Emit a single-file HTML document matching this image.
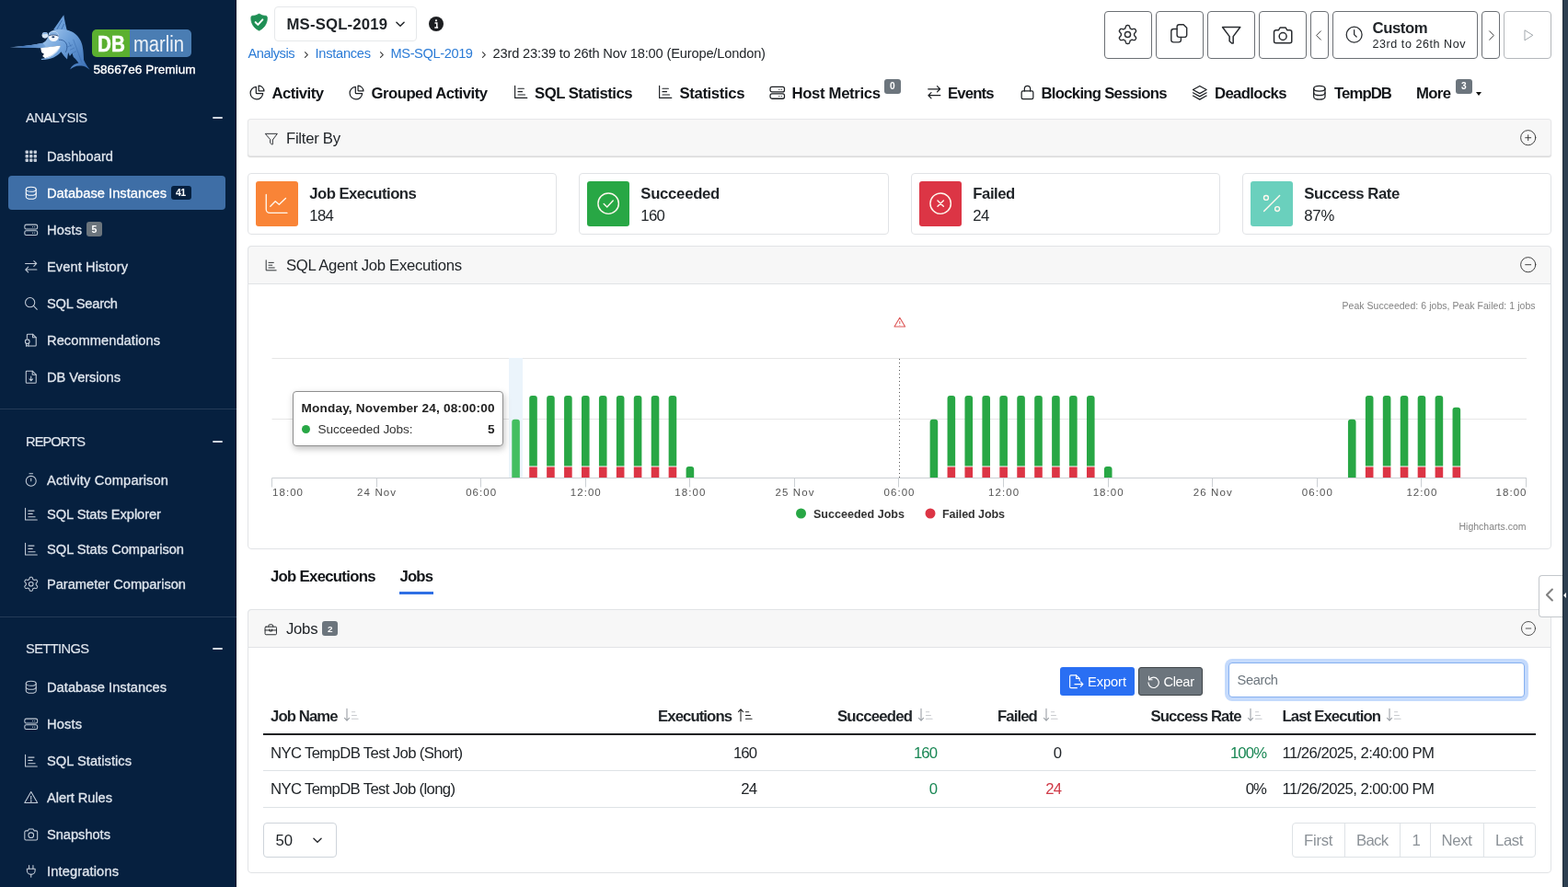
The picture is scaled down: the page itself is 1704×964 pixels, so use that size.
<!DOCTYPE html><html lang="en"><head><meta charset="utf-8"><title>DBmarlin - SQL Agent Jobs</title><style>html,body{margin:0;padding:0}body{width:1704px;height:964px;overflow:hidden;background:#fff;position:relative;will-change:transform;font-family:"Liberation Sans",sans-serif}
.b{position:absolute;box-sizing:content-box}.i{position:absolute;overflow:visible}.t{position:absolute;white-space:nowrap;display:block}</style></head><body><div class="b" style="left:0px;top:0px;width:257px;height:964px;background:#06203f;border-right:1px solid #03152a;box-sizing:border-box"></div><div class="b" style="left:100px;top:32px;width:40.5px;height:30px;background:#5bb030;border-radius:5px 0 0 5px"></div><div class="b" style="left:140.5px;top:32px;width:67px;height:30px;background:#4a7db3;border-radius:0 5px 5px 0"></div><span class="t" style="left:106.3px;top:38px;line-height:20px;font-size:23.3px;font-weight:700;color:#ffffff;letter-spacing:0px;-webkit-text-stroke:0.5px #fff;transform-origin:0 50%;transform:scaleX(0.8854);">DB</span><span class="t" style="left:145.3px;top:38px;line-height:20px;font-size:24.56px;font-weight:400;color:rgba(255,255,255,.9);letter-spacing:0px;transform-origin:0 50%;transform:scaleX(0.8228);">marlin</span><span class="t" style="left:101.5px;top:66px;line-height:20px;font-size:13.58px;font-weight:500;color:#ffffff;letter-spacing:0.003px;-webkit-text-stroke:0.35px #fff;">58667e6 Premium</span><svg class="i" style="left:0;top:0;width:110px;height:90px" viewBox="0 0 110 90"><defs><linearGradient id="fg" gradientUnits="userSpaceOnUse" x1="560" y1="330" x2="1150" y2="780"><stop offset="0" stop-color="#a6c9ee"/><stop offset="0.45" stop-color="#6c9fd9"/><stop offset="1" stop-color="#3b70b6"/></linearGradient><linearGradient id="bl" gradientUnits="userSpaceOnUse" x1="120" y1="0" x2="640" y2="0"><stop offset="0" stop-color="#244f8f" stop-opacity="0"/><stop offset="0.35" stop-color="#3f73b5"/><stop offset="1" stop-color="#7eacdf"/></linearGradient></defs><g transform="translate(0 8) scale(0.08296)"><path d="M835 100C790 165 740 235 700 292L770 310 880 312C862 240 845 170 835 100Z" fill="#6b9ed8"/><path d="M812 170 745 290M840 215 800 300" stroke="#2f62a4" stroke-width="9" fill="none"/><path d="M640 335C680 290 760 285 840 292C930 298 1010 345 1058 440C1082 490 1094 560 1098 690C1120 740 1150 780 1176 816C1130 776 1085 760 1050 765C1000 760 950 785 918 814C940 760 985 735 1030 730C1005 690 985 668 962 650L945 600 915 640 893 590 880 682C850 650 820 615 800 582C760 640 660 690 545 688L538 676C640 660 740 600 792 500L560 532C420 532 270 528 128 522C270 512 440 492 560 466C600 450 625 420 640 335Z" fill="url(#fg)"/><path d="M128 522C270 511 440 492 560 466L610 528C450 534 270 528 128 522Z" fill="url(#bl)"/><path d="M532 533 792 500C770 570 700 632 592 666L556 640 578 612 545 592Z" fill="#fff"/><path d="M592 666C670 640 745 590 792 500C785 560 720 625 640 660Z" fill="#c6daf1"/><circle cx="590" cy="366" r="40" fill="#d6e5f5"/><path d="M552 356a40 40 0 0 1 77-2C605 346 575 346 552 356Z" fill="#86b1e0"/><circle cx="702" cy="380" r="67" fill="#f3f7fc"/><path d="M636 372a67 67 0 0 1 132 4C725 355 675 355 636 372Z" fill="#86b1e0"/><path d="M637 373C680 356 725 356 767 377" stroke="#1d3d6e" stroke-width="10" fill="none"/><ellipse cx="697" cy="390" rx="19" ry="12" fill="#1d3d6e"/><path d="M770 425C825 420 868 452 876 500C882 535 872 566 858 590" stroke="#234e8c" stroke-width="9" fill="none"/><path d="M900 455 930 515M880 520 950 490M915 560 975 530M945 600 1000 575M960 420 1070 720" stroke="#2f62a4" stroke-width="7" fill="none" opacity="0.75"/></g></svg><span class="t" style="left:28px;top:118px;line-height:20px;font-size:14.63px;font-weight:400;color:#dfe5ed;letter-spacing:-0.493px;-webkit-text-stroke:0.15px;">ANALYSIS</span><div class="b" style="left:230.5px;top:127.25px;width:11.5px;height:1.5px;background:#cfd6df;border-radius:1px"></div><div class="b" style="left:9px;top:191px;width:236px;height:37px;background:#3e6ea6;border-radius:4px"></div><svg class="i" style="left:25.45px;top:161.25px;width:17.5px;height:17.5px;color:#c3ccd8" viewBox="0 0 24 24" fill="none" stroke="currentColor" stroke-width="1.45" stroke-linecap="round" stroke-linejoin="round" ><rect x="3.5" y="3.5" width="4.6" height="4.6" rx="1.2" fill="currentColor" stroke="none"/><rect x="9.7" y="3.5" width="4.6" height="4.6" rx="1.2" fill="currentColor" stroke="none"/><rect x="15.9" y="3.5" width="4.6" height="4.6" rx="1.2" fill="currentColor" stroke="none"/><rect x="3.5" y="9.7" width="4.6" height="4.6" rx="1.2" fill="currentColor" stroke="none"/><rect x="9.7" y="9.7" width="4.6" height="4.6" rx="1.2" fill="currentColor" stroke="none"/><rect x="15.9" y="9.7" width="4.6" height="4.6" rx="1.2" fill="currentColor" stroke="none"/><rect x="3.5" y="15.9" width="4.6" height="4.6" rx="1.2" fill="currentColor" stroke="none"/><rect x="9.7" y="15.9" width="4.6" height="4.6" rx="1.2" fill="currentColor" stroke="none"/><rect x="15.9" y="15.9" width="4.6" height="4.6" rx="1.2" fill="currentColor" stroke="none"/></svg><span class="t" style="left:51px;top:160px;line-height:20px;font-size:14.63px;font-weight:400;color:#dfe5ed;letter-spacing:0.057px;-webkit-text-stroke:0.3px;">Dashboard</span><svg class="i" style="left:25.45px;top:201.25px;width:17.5px;height:17.5px;color:#ffffff" viewBox="0 0 24 24" fill="none" stroke="currentColor" stroke-width="1.45" stroke-linecap="round" stroke-linejoin="round" ><ellipse cx="12" cy="6.5" rx="7.5" ry="3.5"/><path d="M4.5 6.5v11c0 1.9 3.4 3.5 7.5 3.5s7.5-1.6 7.5-3.5v-11"/><path d="M4.5 12c0 1.9 3.4 3.5 7.5 3.5s7.5-1.6 7.5-3.5"/></svg><span class="t" style="left:51px;top:200px;line-height:20px;font-size:14.63px;font-weight:500;color:#ffffff;letter-spacing:0.042px;-webkit-text-stroke:0.3px;">Database Instances</span><div class="b" style="left:186px;top:202px;width:22px;height:15px;background:#06203f;border-radius:3px"></div><span class="t" style="left:191px;top:200px;line-height:20px;font-size:10.45px;font-weight:700;color:#ffffff;letter-spacing:-0.625px;">41</span><svg class="i" style="left:25.45px;top:241.25px;width:17.5px;height:17.5px;color:#c3ccd8" viewBox="0 0 24 24" fill="none" stroke="currentColor" stroke-width="1.45" stroke-linecap="round" stroke-linejoin="round" ><rect x="2.5" y="4.3" width="19" height="6.7" rx="2.4"/><rect x="2.5" y="13.3" width="19" height="6.7" rx="2.4"/><path d="M14.5 7.65h.01M17.5 7.65h.01M14.5 16.65h.01M17.5 16.65h.01" stroke-width="1.6"/></svg><span class="t" style="left:51px;top:240px;line-height:20px;font-size:14.63px;font-weight:400;color:#dfe5ed;letter-spacing:0.152px;-webkit-text-stroke:0.3px;">Hosts</span><div class="b" style="left:93.5px;top:241px;width:17.5px;height:16px;background:#6c757d;border-radius:3px"></div><span class="t" style="left:99.5px;top:240px;line-height:20px;font-size:10.45px;font-weight:700;color:#ffffff;letter-spacing:0px;">5</span><svg class="i" style="left:25.45px;top:281.25px;width:17.5px;height:17.5px;color:#c3ccd8" viewBox="0 0 24 24" fill="none" stroke="currentColor" stroke-width="1.45" stroke-linecap="round" stroke-linejoin="round" ><path d="M3.5 7.5h16.5M16.2 3.5 20.2 7.5l-4 4"/><path d="M20.5 16.5H4M7.8 12.5 3.8 16.5l4 4"/></svg><span class="t" style="left:51px;top:280px;line-height:20px;font-size:14.63px;font-weight:400;color:#dfe5ed;letter-spacing:0.086px;-webkit-text-stroke:0.3px;">Event History</span><svg class="i" style="left:25.45px;top:321.25px;width:17.5px;height:17.5px;color:#c3ccd8" viewBox="0 0 24 24" fill="none" stroke="currentColor" stroke-width="1.45" stroke-linecap="round" stroke-linejoin="round" ><circle cx="10.5" cy="10.5" r="7"/><path d="M15.7 15.7 21 21"/></svg><span class="t" style="left:51px;top:320px;line-height:20px;font-size:14.63px;font-weight:400;color:#dfe5ed;letter-spacing:-0.236px;-webkit-text-stroke:0.3px;">SQL Search</span><svg class="i" style="left:25.45px;top:361.25px;width:17.5px;height:17.5px;color:#c3ccd8" viewBox="0 0 24 24" fill="none" stroke="currentColor" stroke-width="1.45" stroke-linecap="round" stroke-linejoin="round" ><path d="M9 20.5h9.5a1 1 0 0 0 1-1V8l-5-5H7a1 1 0 0 0-1 1v5"/><path d="M14.5 3v5h5"/><circle cx="6.5" cy="14" r="3.2"/><path d="M4.8 16.8V21l1.7-1 1.7 1v-4.2"/></svg><span class="t" style="left:51px;top:360px;line-height:20px;font-size:14.63px;font-weight:400;color:#dfe5ed;letter-spacing:0.076px;-webkit-text-stroke:0.3px;">Recommendations</span><svg class="i" style="left:25.45px;top:401.25px;width:17.5px;height:17.5px;color:#c3ccd8" viewBox="0 0 24 24" fill="none" stroke="currentColor" stroke-width="1.45" stroke-linecap="round" stroke-linejoin="round" ><path d="M18.5 21h-13a1 1 0 0 1-1-1V4a1 1 0 0 1 1-1H14l5.5 5.5V20a1 1 0 0 1-1 1z"/><path d="M14 3v5.5h5.5"/><path d="M12 11v6.5M9.5 15l2.5 2.5 2.5-2.5"/></svg><span class="t" style="left:51px;top:400px;line-height:20px;font-size:14.63px;font-weight:400;color:#dfe5ed;letter-spacing:-0.048px;-webkit-text-stroke:0.3px;">DB Versions</span><div class="b" style="left:0px;top:443.5px;width:257px;height:1px;background:#243b57"></div><span class="t" style="left:28px;top:470px;line-height:20px;font-size:14.63px;font-weight:400;color:#dfe5ed;letter-spacing:-0.9px;-webkit-text-stroke:0.15px;">REPORTS</span><div class="b" style="left:230.5px;top:479.25px;width:11.5px;height:1.5px;background:#cfd6df;border-radius:1px"></div><svg class="i" style="left:25.45px;top:513.25px;width:17.5px;height:17.5px;color:#c3ccd8" viewBox="0 0 24 24" fill="none" stroke="currentColor" stroke-width="1.45" stroke-linecap="round" stroke-linejoin="round" ><circle cx="12" cy="13.5" r="7.5"/><path d="M12 13.5V9.5M9.5 2.5h5"/></svg><span class="t" style="left:51px;top:512px;line-height:20px;font-size:14.63px;font-weight:400;color:#dfe5ed;letter-spacing:0.154px;-webkit-text-stroke:0.3px;">Activity Comparison</span><svg class="i" style="left:25.45px;top:550.25px;width:17.5px;height:17.5px;color:#c3ccd8" viewBox="0 0 24 24" fill="none" stroke="currentColor" stroke-width="1.45" stroke-linecap="round" stroke-linejoin="round" ><path d="M3.5 3v17.5h17.5"/><path d="M8 7h8.5M8 11.5h6M8 16h10"/></svg><span class="t" style="left:51px;top:549px;line-height:20px;font-size:14.63px;font-weight:400;color:#dfe5ed;letter-spacing:-0.038px;-webkit-text-stroke:0.3px;">SQL Stats Explorer</span><svg class="i" style="left:25.45px;top:588.25px;width:17.5px;height:17.5px;color:#c3ccd8" viewBox="0 0 24 24" fill="none" stroke="currentColor" stroke-width="1.45" stroke-linecap="round" stroke-linejoin="round" ><path d="M3.5 3v17.5h17.5"/><path d="M8 7h8.5M8 11.5h6M8 16h10"/></svg><span class="t" style="left:51px;top:587px;line-height:20px;font-size:14.63px;font-weight:400;color:#dfe5ed;letter-spacing:-0.002px;-webkit-text-stroke:0.3px;">SQL Stats Comparison</span><svg class="i" style="left:25.45px;top:626.25px;width:17.5px;height:17.5px;color:#c3ccd8" viewBox="0 0 24 24" fill="none" stroke="currentColor" stroke-width="1.45" stroke-linecap="round" stroke-linejoin="round" ><circle cx="12" cy="12" r="3.2"/><path d="M12 1.65 12.45 1.66 12.9 1.69 13.35 1.74 13.73 2.16 14.05 2.76 14.3 3.4 14.51 4.05 14.67 4.66 14.85 5.12 15.15 5.25 15.44 5.39 15.72 5.55 16 5.72 16.27 5.9 16.54 6.09 17.02 6.02 17.63 5.85 18.29 5.71 18.98 5.61 19.65 5.58 20.21 5.7 20.48 6.06 20.73 6.44 20.96 6.83 21.18 7.22 21.38 7.63 21.56 8.04 21.39 8.58 21.02 9.15 20.6 9.7 20.14 10.2 19.69 10.64 19.39 11.03 19.42 11.35 19.44 11.68 19.45 12 19.44 12.32 19.42 12.65 19.39 12.97 19.69 13.36 20.14 13.8 20.6 14.3 21.02 14.85 21.39 15.42 21.56 15.96 21.38 16.37 21.18 16.78 20.96 17.17 20.73 17.56 20.48 17.94 20.21 18.3 19.65 18.42 18.98 18.39 18.29 18.29 17.63 18.15 17.02 17.98 16.54 17.91 16.27 18.1 16 18.28 15.73 18.45 15.44 18.61 15.15 18.75 14.85 18.88 14.67 19.34 14.51 19.95 14.3 20.6 14.05 21.24 13.73 21.84 13.35 22.26 12.9 22.31 12.45 22.34 12 22.35 11.55 22.34 11.1 22.31 10.65 22.26 10.27 21.84 9.95 21.24 9.7 20.6 9.49 19.95 9.33 19.34 9.15 18.88 8.85 18.75 8.56 18.61 8.27 18.45 8 18.28 7.73 18.1 7.46 17.91 6.98 17.98 6.37 18.15 5.71 18.29 5.02 18.39 4.35 18.42 3.79 18.3 3.52 17.94 3.27 17.56 3.04 17.18 2.82 16.78 2.62 16.37 2.44 15.96 2.61 15.42 2.98 14.85 3.4 14.3 3.86 13.8 4.31 13.36 4.61 12.97 4.58 12.65 4.56 12.32 4.55 12 4.56 11.68 4.58 11.35 4.61 11.03 4.31 10.64 3.86 10.2 3.4 9.7 2.98 9.15 2.61 8.58 2.44 8.04 2.62 7.63 2.82 7.22 3.04 6.83 3.27 6.44 3.52 6.06 3.79 5.7 4.35 5.58 5.02 5.61 5.71 5.71 6.37 5.85 6.98 6.02 7.46 6.09 7.73 5.9 8 5.72 8.28 5.55 8.56 5.39 8.85 5.25 9.15 5.12 9.33 4.66 9.49 4.05 9.7 3.4 9.95 2.76 10.27 2.16 10.65 1.74 11.1 1.69 11.55 1.66z"/></svg><span class="t" style="left:51px;top:625px;line-height:20px;font-size:14.63px;font-weight:400;color:#dfe5ed;letter-spacing:-0.01px;-webkit-text-stroke:0.3px;">Parameter Comparison</span><div class="b" style="left:0px;top:669.5px;width:257px;height:1px;background:#243b57"></div><span class="t" style="left:28px;top:695px;line-height:20px;font-size:14.63px;font-weight:400;color:#dfe5ed;letter-spacing:-0.592px;-webkit-text-stroke:0.15px;">SETTINGS</span><div class="b" style="left:230.5px;top:704.25px;width:11.5px;height:1.5px;background:#cfd6df;border-radius:1px"></div><svg class="i" style="left:25.45px;top:738.25px;width:17.5px;height:17.5px;color:#c3ccd8" viewBox="0 0 24 24" fill="none" stroke="currentColor" stroke-width="1.45" stroke-linecap="round" stroke-linejoin="round" ><ellipse cx="12" cy="6.5" rx="7.5" ry="3.5"/><path d="M4.5 6.5v11c0 1.9 3.4 3.5 7.5 3.5s7.5-1.6 7.5-3.5v-11"/><path d="M4.5 12c0 1.9 3.4 3.5 7.5 3.5s7.5-1.6 7.5-3.5"/></svg><span class="t" style="left:51px;top:737px;line-height:20px;font-size:14.63px;font-weight:400;color:#dfe5ed;letter-spacing:0.042px;-webkit-text-stroke:0.3px;">Database Instances</span><svg class="i" style="left:25.45px;top:778.25px;width:17.5px;height:17.5px;color:#c3ccd8" viewBox="0 0 24 24" fill="none" stroke="currentColor" stroke-width="1.45" stroke-linecap="round" stroke-linejoin="round" ><rect x="2.5" y="4.3" width="19" height="6.7" rx="2.4"/><rect x="2.5" y="13.3" width="19" height="6.7" rx="2.4"/><path d="M14.5 7.65h.01M17.5 7.65h.01M14.5 16.65h.01M17.5 16.65h.01" stroke-width="1.6"/></svg><span class="t" style="left:51px;top:777px;line-height:20px;font-size:14.63px;font-weight:400;color:#dfe5ed;letter-spacing:0.152px;-webkit-text-stroke:0.3px;">Hosts</span><svg class="i" style="left:25.45px;top:818.25px;width:17.5px;height:17.5px;color:#c3ccd8" viewBox="0 0 24 24" fill="none" stroke="currentColor" stroke-width="1.45" stroke-linecap="round" stroke-linejoin="round" ><path d="M3.5 3v17.5h17.5"/><path d="M8 7h8.5M8 11.5h6M8 16h10"/></svg><span class="t" style="left:51px;top:817px;line-height:20px;font-size:14.63px;font-weight:400;color:#dfe5ed;letter-spacing:0.053px;-webkit-text-stroke:0.3px;">SQL Statistics</span><svg class="i" style="left:25.45px;top:858.25px;width:17.5px;height:17.5px;color:#c3ccd8" viewBox="0 0 24 24" fill="none" stroke="currentColor" stroke-width="1.45" stroke-linecap="round" stroke-linejoin="round" ><path d="M12 3.5 2.5 20h19z"/><path d="M12 10v5"/><circle cx="12" cy="17.5" r="0.5" fill="currentColor"/></svg><span class="t" style="left:51px;top:857px;line-height:20px;font-size:14.63px;font-weight:400;color:#dfe5ed;letter-spacing:-0.053px;-webkit-text-stroke:0.3px;">Alert Rules</span><svg class="i" style="left:25.45px;top:898.25px;width:17.5px;height:17.5px;color:#c3ccd8" viewBox="0 0 24 24" fill="none" stroke="currentColor" stroke-width="1.45" stroke-linecap="round" stroke-linejoin="round" ><path d="M2.5 8.7a2 2 0 0 1 2-2h2.8L9 4h6l1.7 2.7h2.8a2 2 0 0 1 2 2V18.5a2 2 0 0 1-2 2h-15a2 2 0 0 1-2-2z"/><circle cx="12" cy="13.3" r="3.9"/></svg><span class="t" style="left:51px;top:897px;line-height:20px;font-size:14.63px;font-weight:400;color:#dfe5ed;letter-spacing:-0.016px;-webkit-text-stroke:0.3px;">Snapshots</span><svg class="i" style="left:25.45px;top:938.25px;width:17.5px;height:17.5px;color:#c3ccd8" viewBox="0 0 24 24" fill="none" stroke="currentColor" stroke-width="1.45" stroke-linecap="round" stroke-linejoin="round" ><path d="M6 8.5h12v2.5a6 6 0 0 1-12 0z"/><path d="M9 8.5V3.5M15 8.5V3.5M12 17v4"/></svg><span class="t" style="left:51px;top:937px;line-height:20px;font-size:14.63px;font-weight:400;color:#dfe5ed;letter-spacing:0.142px;-webkit-text-stroke:0.3px;">Integrations</span><svg class="i" style="left:271.9px;top:14.2px;width:19.2px;height:19.8px" viewBox="0 0 20 20.4"><path d="M8.8 1.5Q10 .6 11.2 1.5C13 2.7 15 3.3 17.3 3.2 18.4 3.2 19 3.9 19.1 5 19.5 11 16.3 17 10 19.9 3.7 17 .5 11 .9 5 1 3.9 1.6 3.2 2.7 3.2 5 3.3 7 2.7 8.8 1.5Z" fill="#1f8f55" stroke="#1f8f55" stroke-width="0.8" stroke-linejoin="round"/><path d="M5.9 10.5 8.7 13.3 13.9 7.6" fill="none" stroke="#fff" stroke-width="2.1" stroke-linecap="round" stroke-linejoin="round"/></svg><div class="b" style="left:298px;top:7px;width:154.5px;height:37.5px;border:1px solid #e6e8ea;border-radius:4px;background:#fff;box-sizing:border-box"></div><span class="t" style="left:311.5px;top:17px;line-height:20px;font-size:16.72px;font-weight:700;color:#212529;letter-spacing:0.181px;">MS-SQL-2019</span><svg class="i" style="left:427.6px;top:19.2px;width:14px;height:14px;color:#212529" viewBox="0 0 24 24" fill="none" stroke="currentColor" stroke-width="2.5" stroke-linecap="round" stroke-linejoin="round" ><path d="M5 9l7 7 7-7"/></svg><svg class="i" style="left:466px;top:18.2px;width:16px;height:16px" viewBox="0 0 16 16"><circle cx="8" cy="8" r="8" fill="#1c1e21"/><circle cx="8" cy="4.3" r="1.15" fill="#fff"/><path d="M6.5 7h2.3v4.7M6.3 11.9h3.8" stroke="#fff" stroke-width="1.5" fill="none"/></svg><span class="t" style="left:269.5px;top:48px;line-height:20px;font-size:14.63px;font-weight:400;color:#2b7bd6;letter-spacing:-0.496px;">Analysis</span><svg class="i" style="left:327.9px;top:55px;width:9.2px;height:9.2px;color:#3a3a3a" viewBox="0 0 24 24" fill="none" stroke="currentColor" stroke-width="2.9" stroke-linecap="round" stroke-linejoin="round" ><path d="M9 4.5 16.5 12 9 19.5"/></svg><span class="t" style="left:342.5px;top:48px;line-height:20px;font-size:14.63px;font-weight:400;color:#2b7bd6;letter-spacing:-0.264px;">Instances</span><svg class="i" style="left:409.9px;top:55px;width:9.2px;height:9.2px;color:#3a3a3a" viewBox="0 0 24 24" fill="none" stroke="currentColor" stroke-width="2.9" stroke-linecap="round" stroke-linejoin="round" ><path d="M9 4.5 16.5 12 9 19.5"/></svg><span class="t" style="left:424.5px;top:48px;line-height:20px;font-size:14.63px;font-weight:400;color:#2b7bd6;letter-spacing:-0.398px;">MS-SQL-2019</span><svg class="i" style="left:520.9px;top:55px;width:9.2px;height:9.2px;color:#3a3a3a" viewBox="0 0 24 24" fill="none" stroke="currentColor" stroke-width="2.9" stroke-linecap="round" stroke-linejoin="round" ><path d="M9 4.5 16.5 12 9 19.5"/></svg><span class="t" style="left:535.5px;top:48px;line-height:20px;font-size:14.63px;font-weight:400;color:#212529;letter-spacing:-0.158px;">23rd 23:39 to 26th Nov 18:00 (Europe/London)</span><div class="b" style="left:1200px;top:12px;width:52px;height:52px;border:1px solid #6b6f74;border-radius:4px;box-sizing:border-box;background:#fff"></div><svg class="i" style="left:1214.4px;top:25.7px;width:23px;height:23px;color:#2a2d31" viewBox="0 0 24 24" fill="none" stroke="currentColor" stroke-width="1.5" stroke-linecap="round" stroke-linejoin="round" ><circle cx="12" cy="12" r="3.2"/><path d="M12 1.65 12.45 1.66 12.9 1.69 13.35 1.74 13.73 2.16 14.05 2.76 14.3 3.4 14.51 4.05 14.67 4.66 14.85 5.12 15.15 5.25 15.44 5.39 15.72 5.55 16 5.72 16.27 5.9 16.54 6.09 17.02 6.02 17.63 5.85 18.29 5.71 18.98 5.61 19.65 5.58 20.21 5.7 20.48 6.06 20.73 6.44 20.96 6.83 21.18 7.22 21.38 7.63 21.56 8.04 21.39 8.58 21.02 9.15 20.6 9.7 20.14 10.2 19.69 10.64 19.39 11.03 19.42 11.35 19.44 11.68 19.45 12 19.44 12.32 19.42 12.65 19.39 12.97 19.69 13.36 20.14 13.8 20.6 14.3 21.02 14.85 21.39 15.42 21.56 15.96 21.38 16.37 21.18 16.78 20.96 17.17 20.73 17.56 20.48 17.94 20.21 18.3 19.65 18.42 18.98 18.39 18.29 18.29 17.63 18.15 17.02 17.98 16.54 17.91 16.27 18.1 16 18.28 15.73 18.45 15.44 18.61 15.15 18.75 14.85 18.88 14.67 19.34 14.51 19.95 14.3 20.6 14.05 21.24 13.73 21.84 13.35 22.26 12.9 22.31 12.45 22.34 12 22.35 11.55 22.34 11.1 22.31 10.65 22.26 10.27 21.84 9.95 21.24 9.7 20.6 9.49 19.95 9.33 19.34 9.15 18.88 8.85 18.75 8.56 18.61 8.27 18.45 8 18.28 7.73 18.1 7.46 17.91 6.98 17.98 6.37 18.15 5.71 18.29 5.02 18.39 4.35 18.42 3.79 18.3 3.52 17.94 3.27 17.56 3.04 17.18 2.82 16.78 2.62 16.37 2.44 15.96 2.61 15.42 2.98 14.85 3.4 14.3 3.86 13.8 4.31 13.36 4.61 12.97 4.58 12.65 4.56 12.32 4.55 12 4.56 11.68 4.58 11.35 4.61 11.03 4.31 10.64 3.86 10.2 3.4 9.7 2.98 9.15 2.61 8.58 2.44 8.04 2.62 7.63 2.82 7.22 3.04 6.83 3.27 6.44 3.52 6.06 3.79 5.7 4.35 5.58 5.02 5.61 5.71 5.71 6.37 5.85 6.98 6.02 7.46 6.09 7.73 5.9 8 5.72 8.28 5.55 8.56 5.39 8.85 5.25 9.15 5.12 9.33 4.66 9.49 4.05 9.7 3.4 9.95 2.76 10.27 2.16 10.65 1.74 11.1 1.69 11.55 1.66z"/></svg><div class="b" style="left:1256px;top:12px;width:52px;height:52px;border:1px solid #6b6f74;border-radius:4px;box-sizing:border-box;background:#fff"></div><svg class="i" style="left:1270.35px;top:25.35px;width:22.5px;height:22.5px;color:#2a2d31" viewBox="0 0 24 24" fill="none" stroke="currentColor" stroke-width="1.5" stroke-linecap="round" stroke-linejoin="round" ><path d="M12.2 1.8h5l3.8 3.8v8.3a2.5 2.5 0 0 1-2.5 2.5h-6.3a2.5 2.5 0 0 1-2.5-2.5V4.3a2.5 2.5 0 0 1 2.5-2.5z"/><path d="M9.7 7H5.8a2.8 2.8 0 0 0-2.8 2.8v9.7a2.8 2.8 0 0 0 2.8 2.8h5.7a2.8 2.8 0 0 0 2.8-2.8v-3.1"/></svg><div class="b" style="left:1312px;top:12px;width:52px;height:52px;border:1px solid #6b6f74;border-radius:4px;box-sizing:border-box;background:#fff"></div><svg class="i" style="left:1325.85px;top:26.05px;width:24.3px;height:24.3px;color:#2a2d31" viewBox="0 0 24 24" fill="none" stroke="currentColor" stroke-width="1.5" stroke-linecap="round" stroke-linejoin="round" ><path d="M2.5 3.5h19L14 13.5v7.3h-1.5L10 18.5v-5z"/></svg><div class="b" style="left:1368px;top:12px;width:52px;height:52px;border:1px solid #6b6f74;border-radius:4px;box-sizing:border-box;background:#fff"></div><svg class="i" style="left:1381.55px;top:25.85px;width:24.3px;height:24.3px;color:#2a2d31" viewBox="0 0 24 24" fill="none" stroke="currentColor" stroke-width="1.5" stroke-linecap="round" stroke-linejoin="round" ><path d="M2.5 8.7a2 2 0 0 1 2-2h2.8L9 4h6l1.7 2.7h2.8a2 2 0 0 1 2 2V18.5a2 2 0 0 1-2 2h-15a2 2 0 0 1-2-2z"/><circle cx="12" cy="13.3" r="3.9"/></svg><div class="b" style="left:1424px;top:12px;width:20px;height:52px;border:1px solid #6b6f74;border-radius:4px;box-sizing:border-box;background:#fff"></div><svg class="i" style="left:1426.1px;top:31.1px;width:15px;height:15px;color:#333" viewBox="0 0 24 24" fill="none" stroke="currentColor" stroke-width="1.5" stroke-linecap="round" stroke-linejoin="round" ><path d="M15 4.5 7.5 12l7.5 7.5"/></svg><div class="b" style="left:1448px;top:12px;width:158px;height:52px;border:1px solid #6b6f74;border-radius:4px;box-sizing:border-box;background:#fff"></div><svg class="i" style="left:1461.15px;top:26.75px;width:21.3px;height:21.3px;color:#2a2d31" viewBox="0 0 24 24" fill="none" stroke="currentColor" stroke-width="1.45" stroke-linecap="round" stroke-linejoin="round" ><circle cx="12" cy="12" r="9.5"/><path d="M12 6.5V12l2.8 2.6"/></svg><span class="t" style="left:1491.5px;top:21px;line-height:20px;font-size:16.72px;font-weight:700;color:#212529;letter-spacing:-0.434px;">Custom</span><span class="t" style="left:1491.5px;top:38px;line-height:20px;font-size:12.54px;font-weight:400;color:#212529;letter-spacing:0.556px;">23rd to 26th Nov</span><div class="b" style="left:1610px;top:12px;width:20px;height:52px;border:1px solid #6b6f74;border-radius:4px;box-sizing:border-box;background:#fff"></div><svg class="i" style="left:1613px;top:31.1px;width:15px;height:15px;color:#333" viewBox="0 0 24 24" fill="none" stroke="currentColor" stroke-width="1.5" stroke-linecap="round" stroke-linejoin="round" ><path d="M9 4.5 16.5 12 9 19.5"/></svg><div class="b" style="left:1634px;top:12px;width:52px;height:52px;border:1px solid #b4b7bb;border-radius:4px;box-sizing:border-box;background:#fff"></div><svg class="i" style="left:1651.5px;top:30px;width:17px;height:17px;color:#9aa0a6" viewBox="0 0 24 24" fill="none" stroke="currentColor" stroke-width="1.3" stroke-linecap="round" stroke-linejoin="round" ><path d="M7 4.5v15l12-7.5z"/></svg><svg class="i" style="left:270.2px;top:90.9px;width:19px;height:19px;color:#1d2024" viewBox="0 0 24 24" fill="none" stroke="currentColor" stroke-width="1.55" stroke-linecap="round" stroke-linejoin="round" ><path d="M10.5 4.2A8.6 8.6 0 1 0 19.8 13.5H11.5a1 1 0 0 1-1-1z"/><path d="M14 2.6v6.4a1 1 0 0 0 1 1h6.4A8 8 0 0 0 14 2.6z"/></svg><span class="t" style="left:295.5px;top:92px;line-height:20px;font-size:16.72px;font-weight:700;color:#111418;letter-spacing:-0.549px;">Activity</span><svg class="i" style="left:378.2px;top:90.9px;width:19px;height:19px;color:#1d2024" viewBox="0 0 24 24" fill="none" stroke="currentColor" stroke-width="1.55" stroke-linecap="round" stroke-linejoin="round" ><path d="M10.5 4.2A8.6 8.6 0 1 0 19.8 13.5H11.5a1 1 0 0 1-1-1z"/><path d="M14 2.6v6.4a1 1 0 0 0 1 1h6.4A8 8 0 0 0 14 2.6z"/></svg><span class="t" style="left:403.5px;top:92px;line-height:20px;font-size:16.72px;font-weight:700;color:#111418;letter-spacing:-0.497px;">Grouped Activity</span><svg class="i" style="left:557px;top:91.4px;width:18px;height:18px;color:#1d2024" viewBox="0 0 24 24" fill="none" stroke="currentColor" stroke-width="1.55" stroke-linecap="round" stroke-linejoin="round" ><path d="M3.5 3v17.5h17.5"/><path d="M8 7h8.5M8 11.5h6M8 16h10"/></svg><span class="t" style="left:581px;top:92px;line-height:20px;font-size:16.72px;font-weight:700;color:#111418;letter-spacing:-0.496px;">SQL Statistics</span><svg class="i" style="left:713.5px;top:91.4px;width:18px;height:18px;color:#1d2024" viewBox="0 0 24 24" fill="none" stroke="currentColor" stroke-width="1.55" stroke-linecap="round" stroke-linejoin="round" ><path d="M3.5 3v17.5h17.5"/><path d="M8 7h8.5M8 11.5h6M8 16h10"/></svg><span class="t" style="left:738.5px;top:92px;line-height:20px;font-size:16.72px;font-weight:700;color:#111418;letter-spacing:-0.365px;">Statistics</span><svg class="i" style="left:835.45px;top:90.65px;width:19.5px;height:19.5px;color:#1d2024" viewBox="0 0 24 24" fill="none" stroke="currentColor" stroke-width="1.55" stroke-linecap="round" stroke-linejoin="round" ><rect x="2.5" y="4.3" width="19" height="6.7" rx="2.4"/><rect x="2.5" y="13.3" width="19" height="6.7" rx="2.4"/><path d="M14.5 7.65h.01M17.5 7.65h.01M14.5 16.65h.01M17.5 16.65h.01" stroke-width="1.6"/></svg><span class="t" style="left:860.5px;top:92px;line-height:20px;font-size:16.72px;font-weight:700;color:#111418;letter-spacing:-0.341px;">Host Metrics</span><div class="b" style="left:961px;top:86px;width:17.5px;height:15.5px;background:#6c757d;border-radius:3px"></div><span class="t" style="left:967px;top:84px;line-height:20px;font-size:10.14px;font-weight:700;color:#fff;letter-spacing:0px;">0</span><svg class="i" style="left:1005.75px;top:91.15px;width:18.5px;height:18.5px;color:#1d2024" viewBox="0 0 24 24" fill="none" stroke="currentColor" stroke-width="1.55" stroke-linecap="round" stroke-linejoin="round" ><path d="M3.5 7.5h16.5M16.2 3.5 20.2 7.5l-4 4"/><path d="M20.5 16.5H4M7.8 12.5 3.8 16.5l4 4"/></svg><span class="t" style="left:1030px;top:92px;line-height:20px;font-size:16.72px;font-weight:700;color:#111418;letter-spacing:-0.856px;">Events</span><svg class="i" style="left:1107.1px;top:90.9px;width:19px;height:19px;color:#1d2024" viewBox="0 0 24 24" fill="none" stroke="currentColor" stroke-width="1.55" stroke-linecap="round" stroke-linejoin="round" ><rect x="4" y="10" width="16" height="11" rx="2"/><path d="M8 10V7a4 4 0 0 1 8 0v3"/></svg><span class="t" style="left:1131.5px;top:92px;line-height:20px;font-size:16.72px;font-weight:700;color:#111418;letter-spacing:-0.721px;">Blocking Sessions</span><svg class="i" style="left:1294.4px;top:90.6px;width:19.6px;height:19.6px;color:#1d2024" viewBox="0 0 24 24" fill="none" stroke="currentColor" stroke-width="1.55" stroke-linecap="round" stroke-linejoin="round" ><path d="M12 3 3 8l9 5 9-5z"/><path d="M3 12l9 5 9-5"/><path d="M3 16l9 5 9-5"/></svg><span class="t" style="left:1320px;top:92px;line-height:20px;font-size:16.72px;font-weight:700;color:#111418;letter-spacing:-0.633px;">Deadlocks</span><svg class="i" style="left:1424.25px;top:90.55px;width:19.7px;height:19.7px;color:#1d2024" viewBox="0 0 24 24" fill="none" stroke="currentColor" stroke-width="1.55" stroke-linecap="round" stroke-linejoin="round" ><ellipse cx="12" cy="6.5" rx="7.5" ry="3.5"/><path d="M4.5 6.5v11c0 1.9 3.4 3.5 7.5 3.5s7.5-1.6 7.5-3.5v-11"/><path d="M4.5 12c0 1.9 3.4 3.5 7.5 3.5s7.5-1.6 7.5-3.5"/></svg><span class="t" style="left:1450px;top:92px;line-height:20px;font-size:16.72px;font-weight:700;color:#111418;letter-spacing:-0.9px;">TempDB</span><span class="t" style="left:1539px;top:92px;line-height:20px;font-size:16.72px;font-weight:700;color:#111418;letter-spacing:-0.641px;">More</span><div class="b" style="left:1582px;top:86px;width:17.5px;height:15.5px;background:#6c757d;border-radius:3px"></div><span class="t" style="left:1588px;top:84px;line-height:20px;font-size:10.14px;font-weight:700;color:#fff;letter-spacing:0px;">3</span><div class="b" style="left:1604px;top:99.5px;width:0;height:0;border-left:3.8px solid transparent;border-right:3.8px solid transparent;border-top:4px solid #111"></div><div class="b" style="left:269px;top:129px;width:1417px;height:41px;background:#f7f7f7;border:1px solid #e6e7e9;border-radius:3px;box-sizing:border-box;box-shadow:0 1px 1px rgba(0,0,0,.16)"></div><svg class="i" style="left:286.5px;top:142.5px;width:16px;height:16px;color:#212529" viewBox="0 0 24 24" fill="none" stroke="currentColor" stroke-width="1.4" stroke-linecap="round" stroke-linejoin="round" ><path d="M2.5 3.5h19L14 13.5v7.3h-1.5L10 18.5v-5z"/></svg><span class="t" style="left:311px;top:141px;line-height:20px;font-size:16.72px;font-weight:400;color:#212529;letter-spacing:-0.283px;">Filter By</span><svg class="i" style="left:1651.4px;top:140.2px;width:19.4px;height:19.4px;color:#333" viewBox="0 0 24 24" fill="none" stroke="currentColor" stroke-width="1.15" stroke-linecap="round" stroke-linejoin="round" ><circle cx="12" cy="12" r="10"/><path d="M8.3 12h7.4M12 8.3v7.4"/></svg><div class="b" style="left:269px;top:188px;width:336px;height:67px;background:#fff;border:1px solid #e1e3e6;border-radius:4px;box-sizing:border-box"></div><div class="b" style="left:278px;top:197px;width:46px;height:49px;background:#f98437;border-radius:3px"></div><svg class="i" style="left:285.4px;top:205.6px;width:31px;height:31px;color:#fff8ee" viewBox="0 0 24 24" fill="none" stroke="currentColor" stroke-width="1.05" stroke-linecap="round" stroke-linejoin="round" ><path d="M3.3 4.2v12.4a3 3 0 0 0 3 3h14.6"/><path d="M6.8 14.1 11 9.9l3.2 2.7 5.5-5.2"/></svg><span class="t" style="left:336.3px;top:201px;line-height:20px;font-size:16.72px;font-weight:700;color:#212529;letter-spacing:-0.535px;">Job Executions</span><span class="t" style="left:336.3px;top:225px;line-height:20px;font-size:16.72px;font-weight:400;color:#212529;letter-spacing:-0.688px;">184</span><div class="b" style="left:629px;top:188px;width:336.5px;height:67px;background:#fff;border:1px solid #e1e3e6;border-radius:4px;box-sizing:border-box"></div><div class="b" style="left:638px;top:197px;width:46px;height:49px;background:#28a745;border-radius:3px"></div><svg class="i" style="left:646.95px;top:206.95px;width:28.3px;height:28.3px;color:#fff8ee" viewBox="0 0 24 24" fill="none" stroke="currentColor" stroke-width="1.2" stroke-linecap="round" stroke-linejoin="round" ><circle cx="12" cy="12" r="9.5"/><path d="M7.8 12.3 10.8 15.2 16.3 9.3"/></svg><span class="t" style="left:696.3px;top:201px;line-height:20px;font-size:16.72px;font-weight:700;color:#212529;letter-spacing:-0.275px;">Succeeded</span><span class="t" style="left:696.3px;top:225px;line-height:20px;font-size:16.72px;font-weight:400;color:#212529;letter-spacing:-0.688px;">160</span><div class="b" style="left:990px;top:188px;width:336px;height:67px;background:#fff;border:1px solid #e1e3e6;border-radius:4px;box-sizing:border-box"></div><div class="b" style="left:999px;top:197px;width:46px;height:49px;background:#dc3545;border-radius:3px"></div><svg class="i" style="left:1007.55px;top:206.95px;width:28.3px;height:28.3px;color:#fff8ee" viewBox="0 0 24 24" fill="none" stroke="currentColor" stroke-width="1.2" stroke-linecap="round" stroke-linejoin="round" ><circle cx="12" cy="12" r="9.5"/><path d="M9.3 9.3 14.7 14.7M14.7 9.3 9.3 14.7"/></svg><span class="t" style="left:1057.3px;top:201px;line-height:20px;font-size:16.72px;font-weight:700;color:#212529;letter-spacing:-0.456px;">Failed</span><span class="t" style="left:1057.3px;top:225px;line-height:20px;font-size:16.72px;font-weight:400;color:#212529;letter-spacing:-0.594px;">24</span><div class="b" style="left:1350px;top:188px;width:336px;height:67px;background:#fff;border:1px solid #e1e3e6;border-radius:4px;box-sizing:border-box"></div><div class="b" style="left:1359px;top:197px;width:46px;height:49px;background:#6ad0bd;border-radius:3px"></div><svg class="i" style="left:1367.8px;top:207.1px;width:28px;height:28px;color:#fff8ee" viewBox="0 0 24 24" fill="none" stroke="currentColor" stroke-width="1.2" stroke-linecap="round" stroke-linejoin="round" ><path d="M19.4 4.7 4.8 19.3"/><circle cx="6.8" cy="6.8" r="2.1"/><circle cx="17.2" cy="17.2" r="2.1"/></svg><span class="t" style="left:1417.3px;top:201px;line-height:20px;font-size:16.72px;font-weight:700;color:#212529;letter-spacing:-0.422px;">Success Rate</span><span class="t" style="left:1417.3px;top:225px;line-height:20px;font-size:16.72px;font-weight:400;color:#212529;letter-spacing:-0.219px;">87%</span><div class="b" style="left:269px;top:267px;width:1417px;height:330px;background:#fff;border:1px solid #e1e3e6;border-radius:4px;box-sizing:border-box"></div><div class="b" style="left:269px;top:267px;width:1417px;height:42px;background:#f7f7f7;border:1px solid #e1e3e6;border-radius:4px 4px 0 0;box-sizing:border-box"></div><svg class="i" style="left:287px;top:281px;width:15px;height:15px;color:#212529" viewBox="0 0 24 24" fill="none" stroke="currentColor" stroke-width="1.5" stroke-linecap="round" stroke-linejoin="round" ><path d="M3.5 3v17.5h17.5"/><path d="M8 7h8.5M8 11.5h6M8 16h10"/></svg><span class="t" style="left:311px;top:279px;line-height:20px;font-size:16.72px;font-weight:400;color:#212529;letter-spacing:-0.308px;">SQL Agent Job Executions</span><svg class="i" style="left:1651.4px;top:278.3px;width:19.4px;height:19.4px;color:#333" viewBox="0 0 24 24" fill="none" stroke="currentColor" stroke-width="1.15" stroke-linecap="round" stroke-linejoin="round" ><circle cx="12" cy="12" r="10"/><path d="M8.3 12h7.4"/></svg><svg class="i" style="left:0;top:0;width:1704px;height:964px" viewBox="0 0 1704 964" shape-rendering="auto"><path d="M295.5 389.5H1659" stroke="#e6e6e6" stroke-width="1"/><path d="M295.5 455.5H1659" stroke="#e6e6e6" stroke-width="1"/><rect x="553" y="389" width="15" height="130" fill="#ebf4fb"/><path d="M295.5 519.5H1659" stroke="#ccd0d4" stroke-width="1"/><path d="M295.5 519.5V529.5" stroke="#ccd0d4" stroke-width="1"/><path d="M409.5 519.5V529.5" stroke="#ccd0d4" stroke-width="1"/><path d="M522.5 519.5V529.5" stroke="#ccd0d4" stroke-width="1"/><path d="M636.5 519.5V529.5" stroke="#ccd0d4" stroke-width="1"/><path d="M749.5 519.5V529.5" stroke="#ccd0d4" stroke-width="1"/><path d="M863.5 519.5V529.5" stroke="#ccd0d4" stroke-width="1"/><path d="M976.5 519.5V529.5" stroke="#ccd0d4" stroke-width="1"/><path d="M1090.5 519.5V529.5" stroke="#ccd0d4" stroke-width="1"/><path d="M1204.5 519.5V529.5" stroke="#ccd0d4" stroke-width="1"/><path d="M1317.5 519.5V529.5" stroke="#ccd0d4" stroke-width="1"/><path d="M1431.5 519.5V529.5" stroke="#ccd0d4" stroke-width="1"/><path d="M1544.5 519.5V529.5" stroke="#ccd0d4" stroke-width="1"/><path d="M1658.5 519.5V529.5" stroke="#ccd0d4" stroke-width="1"/><path d="M977.5 390V519" stroke="#555" stroke-width="1" stroke-dasharray="1 3"/><path d="M977.8 345.3 972 355H983.6Z" fill="#fff" stroke="#dd5555" stroke-width="1.1" stroke-linejoin="round"/><path d="M977.8 349V352M977.8 353.2v.5" stroke="#dd5555" stroke-width="1"/><path d="M556.28 519V458.7a3 3 0 0 1 3-3h2.6a3 3 0 0 1 3 3V519z" fill="#44be60"/><rect x="575.21" y="507.5" width="8.6" height="11.5" fill="#dc3545"/><path d="M575.21 506.6V433a3 3 0 0 1 3-3h2.6a3 3 0 0 1 3 3V506.6z" fill="#28a745"/><rect x="594.14" y="507.5" width="8.6" height="11.5" fill="#dc3545"/><path d="M594.14 506.6V433a3 3 0 0 1 3-3h2.6a3 3 0 0 1 3 3V506.6z" fill="#28a745"/><rect x="613.07" y="507.5" width="8.6" height="11.5" fill="#dc3545"/><path d="M613.07 506.6V433a3 3 0 0 1 3-3h2.6a3 3 0 0 1 3 3V506.6z" fill="#28a745"/><rect x="632" y="507.5" width="8.6" height="11.5" fill="#dc3545"/><path d="M632 506.6V433a3 3 0 0 1 3-3h2.6a3 3 0 0 1 3 3V506.6z" fill="#28a745"/><rect x="650.93" y="507.5" width="8.6" height="11.5" fill="#dc3545"/><path d="M650.93 506.6V433a3 3 0 0 1 3-3h2.6a3 3 0 0 1 3 3V506.6z" fill="#28a745"/><rect x="669.86" y="507.5" width="8.6" height="11.5" fill="#dc3545"/><path d="M669.86 506.6V433a3 3 0 0 1 3-3h2.6a3 3 0 0 1 3 3V506.6z" fill="#28a745"/><rect x="688.79" y="507.5" width="8.6" height="11.5" fill="#dc3545"/><path d="M688.79 506.6V433a3 3 0 0 1 3-3h2.6a3 3 0 0 1 3 3V506.6z" fill="#28a745"/><rect x="707.72" y="507.5" width="8.6" height="11.5" fill="#dc3545"/><path d="M707.72 506.6V433a3 3 0 0 1 3-3h2.6a3 3 0 0 1 3 3V506.6z" fill="#28a745"/><rect x="726.65" y="507.5" width="8.6" height="11.5" fill="#dc3545"/><path d="M726.65 506.6V433a3 3 0 0 1 3-3h2.6a3 3 0 0 1 3 3V506.6z" fill="#28a745"/><path d="M745.58 519V510.1a3 3 0 0 1 3-3h2.6a3 3 0 0 1 3 3V519z" fill="#28a745"/><path d="M1010.61 519V458.7a3 3 0 0 1 3-3h2.6a3 3 0 0 1 3 3V519z" fill="#28a745"/><rect x="1029.54" y="507.5" width="8.6" height="11.5" fill="#dc3545"/><path d="M1029.54 506.6V433a3 3 0 0 1 3-3h2.6a3 3 0 0 1 3 3V506.6z" fill="#28a745"/><rect x="1048.47" y="507.5" width="8.6" height="11.5" fill="#dc3545"/><path d="M1048.47 506.6V433a3 3 0 0 1 3-3h2.6a3 3 0 0 1 3 3V506.6z" fill="#28a745"/><rect x="1067.4" y="507.5" width="8.6" height="11.5" fill="#dc3545"/><path d="M1067.4 506.6V433a3 3 0 0 1 3-3h2.6a3 3 0 0 1 3 3V506.6z" fill="#28a745"/><rect x="1086.33" y="507.5" width="8.6" height="11.5" fill="#dc3545"/><path d="M1086.33 506.6V433a3 3 0 0 1 3-3h2.6a3 3 0 0 1 3 3V506.6z" fill="#28a745"/><rect x="1105.26" y="507.5" width="8.6" height="11.5" fill="#dc3545"/><path d="M1105.26 506.6V433a3 3 0 0 1 3-3h2.6a3 3 0 0 1 3 3V506.6z" fill="#28a745"/><rect x="1124.19" y="507.5" width="8.6" height="11.5" fill="#dc3545"/><path d="M1124.19 506.6V433a3 3 0 0 1 3-3h2.6a3 3 0 0 1 3 3V506.6z" fill="#28a745"/><rect x="1143.12" y="507.5" width="8.6" height="11.5" fill="#dc3545"/><path d="M1143.12 506.6V433a3 3 0 0 1 3-3h2.6a3 3 0 0 1 3 3V506.6z" fill="#28a745"/><rect x="1162.06" y="507.5" width="8.6" height="11.5" fill="#dc3545"/><path d="M1162.06 506.6V433a3 3 0 0 1 3-3h2.6a3 3 0 0 1 3 3V506.6z" fill="#28a745"/><rect x="1180.99" y="507.5" width="8.6" height="11.5" fill="#dc3545"/><path d="M1180.99 506.6V433a3 3 0 0 1 3-3h2.6a3 3 0 0 1 3 3V506.6z" fill="#28a745"/><path d="M1199.92 519V510.1a3 3 0 0 1 3-3h2.6a3 3 0 0 1 3 3V519z" fill="#28a745"/><path d="M1464.94 519V458.7a3 3 0 0 1 3-3h2.6a3 3 0 0 1 3 3V519z" fill="#28a745"/><rect x="1483.88" y="507.5" width="8.6" height="11.5" fill="#dc3545"/><path d="M1483.88 506.6V433a3 3 0 0 1 3-3h2.6a3 3 0 0 1 3 3V506.6z" fill="#28a745"/><rect x="1502.81" y="507.5" width="8.6" height="11.5" fill="#dc3545"/><path d="M1502.81 506.6V433a3 3 0 0 1 3-3h2.6a3 3 0 0 1 3 3V506.6z" fill="#28a745"/><rect x="1521.74" y="507.5" width="8.6" height="11.5" fill="#dc3545"/><path d="M1521.74 506.6V433a3 3 0 0 1 3-3h2.6a3 3 0 0 1 3 3V506.6z" fill="#28a745"/><rect x="1540.67" y="507.5" width="8.6" height="11.5" fill="#dc3545"/><path d="M1540.67 506.6V433a3 3 0 0 1 3-3h2.6a3 3 0 0 1 3 3V506.6z" fill="#28a745"/><rect x="1559.6" y="507.5" width="8.6" height="11.5" fill="#dc3545"/><path d="M1559.6 506.6V433a3 3 0 0 1 3-3h2.6a3 3 0 0 1 3 3V506.6z" fill="#28a745"/><rect x="1578.53" y="507.5" width="8.6" height="11.5" fill="#dc3545"/><path d="M1578.53 506.6V445.85a3 3 0 0 1 3-3h2.6a3 3 0 0 1 3 3V506.6z" fill="#28a745"/><circle cx="870.5" cy="558" r="5.5" fill="#28a745"/><circle cx="1011" cy="558" r="5.5" fill="#dc3545"/></svg><span class="t" style="left:296px;top:525px;line-height:20px;font-size:11.49px;font-weight:400;color:#555;letter-spacing:1.062px;">18:00</span><span class="t" style="left:388.08px;top:525px;line-height:20px;font-size:11.49px;font-weight:400;color:#555;letter-spacing:1.122px;">24 Nov</span><span class="t" style="left:506.17px;top:525px;line-height:20px;font-size:11.49px;font-weight:400;color:#555;letter-spacing:1.062px;">06:00</span><span class="t" style="left:619.75px;top:525px;line-height:20px;font-size:11.49px;font-weight:400;color:#555;letter-spacing:1.062px;">12:00</span><span class="t" style="left:733.33px;top:525px;line-height:20px;font-size:11.49px;font-weight:400;color:#555;letter-spacing:1.062px;">18:00</span><span class="t" style="left:842.42px;top:525px;line-height:20px;font-size:11.49px;font-weight:400;color:#555;letter-spacing:1.122px;">25 Nov</span><span class="t" style="left:960.5px;top:525px;line-height:20px;font-size:11.49px;font-weight:400;color:#555;letter-spacing:1.062px;">06:00</span><span class="t" style="left:1074.08px;top:525px;line-height:20px;font-size:11.49px;font-weight:400;color:#555;letter-spacing:1.062px;">12:00</span><span class="t" style="left:1187.67px;top:525px;line-height:20px;font-size:11.49px;font-weight:400;color:#555;letter-spacing:1.062px;">18:00</span><span class="t" style="left:1296.75px;top:525px;line-height:20px;font-size:11.49px;font-weight:400;color:#555;letter-spacing:1.122px;">26 Nov</span><span class="t" style="left:1414.83px;top:525px;line-height:20px;font-size:11.49px;font-weight:400;color:#555;letter-spacing:1.062px;">06:00</span><span class="t" style="left:1528.42px;top:525px;line-height:20px;font-size:11.49px;font-weight:400;color:#555;letter-spacing:1.062px;">12:00</span><span class="t" style="left:1625.5px;top:525px;line-height:20px;font-size:11.49px;font-weight:400;color:#555;letter-spacing:1.062px;">18:00</span><span class="t" style="left:884px;top:549px;line-height:20px;font-size:12.54px;font-weight:700;color:#333;letter-spacing:0.007px;">Succeeded Jobs</span><span class="t" style="left:1024px;top:549px;line-height:20px;font-size:12.54px;font-weight:700;color:#333;letter-spacing:-0.095px;">Failed Jobs</span><span class="t" style="left:1458.5px;top:323px;line-height:20px;font-size:10.45px;font-weight:400;color:#828282;letter-spacing:0.068px;">Peak Succeeded: 6 jobs, Peak Failed: 1 jobs</span><span class="t" style="left:1585.5px;top:563px;line-height:20px;font-size:10.45px;font-weight:400;color:#828282;letter-spacing:0.037px;">Highcharts.com</span><div class="b" style="left:318px;top:425px;width:229px;height:60px;background:#fff;border:1px solid #8e8e8e;border-radius:4px;box-sizing:border-box;box-shadow:1px 3px 7px rgba(0,0,0,.25)"></div><span class="t" style="left:327.5px;top:434px;line-height:20px;font-size:13.58px;font-weight:700;color:#222;letter-spacing:0.178px;">Monday, November 24, 08:00:00</span><div class="b" style="left:327.5px;top:461.5px;width:9px;height:9px;border-radius:50%;background:#28a745"></div><span class="t" style="left:345.5px;top:457px;line-height:20px;font-size:13.58px;font-weight:400;color:#333;letter-spacing:-0.084px;">Succeeded Jobs:</span><span class="t" style="left:529.94px;top:457px;line-height:20px;font-size:13.58px;font-weight:700;color:#222;letter-spacing:0px;">5</span><span class="t" style="left:294px;top:617px;line-height:20px;font-size:16.72px;font-weight:700;color:#111418;letter-spacing:-0.689px;">Job Executions</span><span class="t" style="left:434.5px;top:617px;line-height:20px;font-size:16.72px;font-weight:700;color:#111418;letter-spacing:-0.833px;">Jobs</span><div class="b" style="left:434px;top:643px;width:37px;height:3px;background:#2f6fe4"></div><div class="b" style="left:269px;top:662px;width:1417px;height:287px;background:#fff;border:1px solid #e1e3e6;border-radius:4px;box-sizing:border-box"></div><div class="b" style="left:269px;top:662px;width:1417px;height:42px;background:#f7f7f7;border:1px solid #e1e3e6;border-radius:4px 4px 0 0;box-sizing:border-box"></div><svg class="i" style="left:286.25px;top:675.55px;width:16.5px;height:16.5px;color:#212529" viewBox="0 0 24 24" fill="none" stroke="currentColor" stroke-width="1.4" stroke-linecap="round" stroke-linejoin="round" ><rect x="3" y="7.5" width="18" height="12.5" rx="1.5"/><path d="M8.5 7.5V6a2 2 0 0 1 2-2h3a2 2 0 0 1 2 2v1.5"/><path d="M3 13h18M10 11.5v3h4v-3"/></svg><span class="t" style="left:311px;top:674px;line-height:20px;font-size:16.72px;font-weight:400;color:#212529;letter-spacing:-0.266px;">Jobs</span><div class="b" style="left:350px;top:675px;width:17px;height:16px;background:#6c757d;border-radius:3px"></div><span class="t" style="left:355.9px;top:674px;line-height:20px;font-size:9.93px;font-weight:700;color:#fff;letter-spacing:0px;">2</span><svg class="i" style="left:1651.5px;top:673.5px;width:18px;height:18px;color:#333" viewBox="0 0 24 24" fill="none" stroke="currentColor" stroke-width="1.1" stroke-linecap="round" stroke-linejoin="round" ><circle cx="12" cy="12" r="10"/><path d="M8.3 12h7.4"/></svg><div class="b" style="left:1152px;top:725px;width:81px;height:31px;background:#2a6ff3;border-radius:3px"></div><svg class="i" style="left:1159.25px;top:731.05px;width:19.5px;height:19.5px;color:#fff" viewBox="0 0 24 24" fill="none" stroke="currentColor" stroke-width="1.4" stroke-linecap="round" stroke-linejoin="round" ><path d="M14 20.5H6a1.5 1.5 0 0 1-1.5-1.5V5A1.5 1.5 0 0 1 6 3.5h7l4.5 4.5v3"/><path d="M13 3.5V8h4.5"/><path d="M11 15.5h11M19 12.5l3 3-3 3"/></svg><span class="t" style="left:1182px;top:731px;line-height:20px;font-size:14.63px;font-weight:500;color:#fff;letter-spacing:-0.056px;">Export</span><div class="b" style="left:1237px;top:725px;width:70px;height:31px;background:#6c757d;border:1px solid #3f4448;border-radius:3px;box-sizing:border-box"></div><svg class="i" style="left:1244.8px;top:731.8px;width:17px;height:17px;color:#fff" viewBox="0 0 24 24" fill="none" stroke="currentColor" stroke-width="1.6" stroke-linecap="round" stroke-linejoin="round" ><path d="M5 4.5v5h5"/><path d="M5.5 9.5A8 8 0 1 1 4.2 14"/></svg><span class="t" style="left:1264.5px;top:731px;line-height:20px;font-size:14.63px;font-weight:500;color:#fff;letter-spacing:-0.363px;">Clear</span><div class="b" style="left:1335px;top:720px;width:322px;height:37.5px;background:#fff;border:1px solid #86b0f0;border-radius:4px;box-sizing:border-box;box-shadow:0 0 0 4px #c4dafc"></div><span class="t" style="left:1344.5px;top:729px;line-height:20px;font-size:14.63px;font-weight:400;color:#6c757d;letter-spacing:-0.369px;">Search</span><span class="t" style="left:294px;top:769px;line-height:20px;font-size:16.72px;font-weight:700;color:#212529;letter-spacing:-0.9px;">Job Name</span><svg class="i" style="left:371.5px;top:767.3px;width:20px;height:20px;color:#9a9fa5" viewBox="0 0 24 24" fill="none" stroke="currentColor" stroke-width="1.3" stroke-linecap="round" stroke-linejoin="round" ><path d="M6 4v15M3 16l3 3.5 3-3.5"/><path d="M12.5 8h4M12.5 12.5h6M12.5 17h8" opacity="0.55"/></svg><span class="t" style="left:715px;top:769px;line-height:20px;font-size:16.72px;font-weight:700;color:#212529;letter-spacing:-0.9px;">Executions</span><svg class="i" style="left:800px;top:767.3px;width:20px;height:20px;color:#222" viewBox="0 0 24 24" fill="none" stroke="currentColor" stroke-width="1.3" stroke-linecap="round" stroke-linejoin="round" ><path d="M6 20V5M3 8l3-3.5L9 8"/><path d="M12.5 8h4M12.5 12.5h6M12.5 17h8"/></svg><span class="t" style="left:910px;top:769px;line-height:20px;font-size:16.72px;font-weight:700;color:#212529;letter-spacing:-0.775px;">Succeeded</span><svg class="i" style="left:996px;top:767.3px;width:20px;height:20px;color:#9a9fa5" viewBox="0 0 24 24" fill="none" stroke="currentColor" stroke-width="1.3" stroke-linecap="round" stroke-linejoin="round" ><path d="M6 4v15M3 16l3 3.5 3-3.5"/><path d="M12.5 8h4M12.5 12.5h6M12.5 17h8" opacity="0.55"/></svg><span class="t" style="left:1084px;top:769px;line-height:20px;font-size:16.72px;font-weight:700;color:#212529;letter-spacing:-0.9px;">Failed</span><svg class="i" style="left:1131.5px;top:767.3px;width:20px;height:20px;color:#9a9fa5" viewBox="0 0 24 24" fill="none" stroke="currentColor" stroke-width="1.3" stroke-linecap="round" stroke-linejoin="round" ><path d="M6 4v15M3 16l3 3.5 3-3.5"/><path d="M12.5 8h4M12.5 12.5h6M12.5 17h8" opacity="0.55"/></svg><span class="t" style="left:1250.5px;top:769px;line-height:20px;font-size:16.72px;font-weight:700;color:#212529;letter-spacing:-0.876px;">Success Rate</span><svg class="i" style="left:1353.5px;top:767.3px;width:20px;height:20px;color:#9a9fa5" viewBox="0 0 24 24" fill="none" stroke="currentColor" stroke-width="1.3" stroke-linecap="round" stroke-linejoin="round" ><path d="M6 4v15M3 16l3 3.5 3-3.5"/><path d="M12.5 8h4M12.5 12.5h6M12.5 17h8" opacity="0.55"/></svg><span class="t" style="left:1393.5px;top:769px;line-height:20px;font-size:16.72px;font-weight:700;color:#212529;letter-spacing:-0.87px;">Last Execution</span><svg class="i" style="left:1505px;top:767.3px;width:20px;height:20px;color:#9a9fa5" viewBox="0 0 24 24" fill="none" stroke="currentColor" stroke-width="1.3" stroke-linecap="round" stroke-linejoin="round" ><path d="M6 4v15M3 16l3 3.5 3-3.5"/><path d="M12.5 8h4M12.5 12.5h6M12.5 17h8" opacity="0.55"/></svg><div class="b" style="left:286px;top:796.5px;width:1382.5px;height:2px;background:#1c1f23"></div><div class="b" style="left:286px;top:837px;width:1382.5px;height:1px;background:#dee2e6"></div><div class="b" style="left:286px;top:877px;width:1382.5px;height:1px;background:#dee2e6"></div><span class="t" style="left:294px;top:809px;line-height:20px;font-size:16.72px;font-weight:400;color:#212529;letter-spacing:-0.65px;">NYC TempDB Test Job (Short)</span><span class="t" style="left:796.92px;top:809px;line-height:20px;font-size:16.72px;font-weight:400;color:#212529;letter-spacing:-0.9px;">160</span><span class="t" style="left:992.92px;top:809px;line-height:20px;font-size:16.72px;font-weight:400;color:#198754;letter-spacing:-0.9px;">160</span><span class="t" style="left:1144.7px;top:809px;line-height:20px;font-size:16.72px;font-weight:400;color:#212529;letter-spacing:0px;">0</span><span class="t" style="left:1336.97px;top:809px;line-height:20px;font-size:16.72px;font-weight:400;color:#198754;letter-spacing:-0.9px;">100%</span><span class="t" style="left:1393.5px;top:809px;line-height:20px;font-size:16.72px;font-weight:400;color:#212529;letter-spacing:-0.551px;">11/26/2025, 2:40:00 PM</span><span class="t" style="left:294px;top:848px;line-height:20px;font-size:16.72px;font-weight:400;color:#212529;letter-spacing:-0.662px;">NYC TempDB Test Job (long)</span><span class="t" style="left:805.31px;top:848px;line-height:20px;font-size:16.72px;font-weight:400;color:#212529;letter-spacing:-0.9px;">24</span><span class="t" style="left:1009.7px;top:848px;line-height:20px;font-size:16.72px;font-weight:400;color:#198754;letter-spacing:0px;">0</span><span class="t" style="left:1136.31px;top:848px;line-height:20px;font-size:16.72px;font-weight:400;color:#d03b48;letter-spacing:-0.9px;">24</span><span class="t" style="left:1353.74px;top:848px;line-height:20px;font-size:16.72px;font-weight:400;color:#212529;letter-spacing:-0.9px;">0%</span><span class="t" style="left:1393.5px;top:848px;line-height:20px;font-size:16.72px;font-weight:400;color:#212529;letter-spacing:-0.551px;">11/26/2025, 2:00:00 PM</span><div class="b" style="left:286px;top:894px;width:80px;height:38px;background:#fff;border:1px solid #ced4da;border-radius:4px;box-sizing:border-box"></div><span class="t" style="left:299.5px;top:904px;line-height:20px;font-size:16.72px;font-weight:400;color:#212529;letter-spacing:-0.094px;">50</span><svg class="i" style="left:338px;top:906.3px;width:14px;height:14px;color:#2a2d31" viewBox="0 0 24 24" fill="none" stroke="currentColor" stroke-width="2.4" stroke-linecap="round" stroke-linejoin="round" ><path d="M5 9l7 7 7-7"/></svg><div class="b" style="left:1404px;top:894px;width:265px;height:38px;background:#fff;border:1px solid #dee2e6;border-radius:4px;box-sizing:border-box"></div><div class="b" style="left:1461px;top:894px;width:1px;height:38px;background:#dee2e6"></div><div class="b" style="left:1521px;top:894px;width:1px;height:38px;background:#dee2e6"></div><div class="b" style="left:1554px;top:894px;width:1px;height:38px;background:#dee2e6"></div><div class="b" style="left:1612px;top:894px;width:1px;height:38px;background:#dee2e6"></div><span class="t" style="left:1417px;top:904px;line-height:20px;font-size:16.72px;font-weight:400;color:#8b9197;letter-spacing:-0.242px;">First</span><span class="t" style="left:1474px;top:904px;line-height:20px;font-size:16.72px;font-weight:400;color:#8b9197;letter-spacing:-0.714px;">Back</span><span class="t" style="left:1534.5px;top:904px;line-height:20px;font-size:16.72px;font-weight:400;color:#8b9197;letter-spacing:0px;">1</span><span class="t" style="left:1566.5px;top:904px;line-height:20px;font-size:16.72px;font-weight:400;color:#8b9197;letter-spacing:-0.286px;">Next</span><span class="t" style="left:1625px;top:904px;line-height:20px;font-size:16.72px;font-weight:400;color:#8b9197;letter-spacing:-0.359px;">Last</span><div class="b" style="left:1698px;top:0px;width:6px;height:964px;background:#2d3f50;border-left:1px solid #1d2a38;box-sizing:border-box"></div><div class="b" style="left:1672px;top:625px;width:26px;height:46px;background:#fff;border:1px solid #c4c8cc;border-right:none;border-radius:4px 0 0 4px;box-sizing:border-box"></div><svg class="i" style="left:1674.8px;top:637px;width:19px;height:19px;color:#808080" viewBox="0 0 24 24" fill="none" stroke="currentColor" stroke-width="2.6" stroke-linecap="round" stroke-linejoin="round" ><path d="M15 4.5 7.5 12l7.5 7.5"/></svg><div class="b" style="left:1699px;top:643.5px;width:0;height:0;border-top:3.5px solid transparent;border-bottom:3.5px solid transparent;border-right:3.5px solid #fff"></div></body></html>
